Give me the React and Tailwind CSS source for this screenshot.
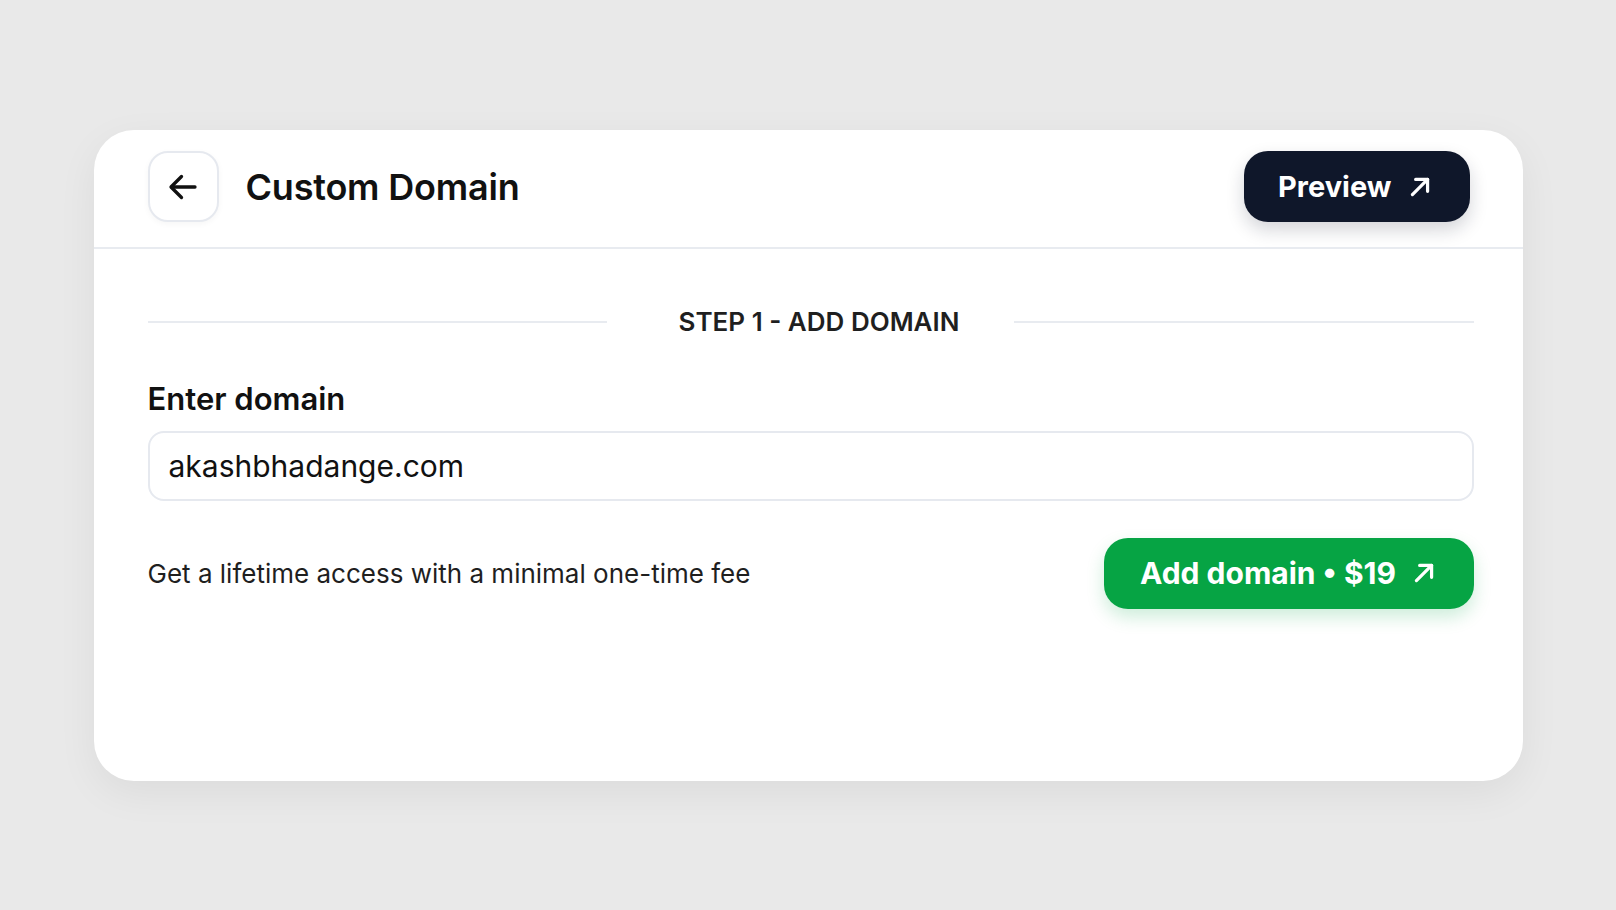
import React, { useState } from "react";

function ArrowLeftIcon() {
  return (
    <svg width="36" height="36" viewBox="0 0 24 24" fill="none" stroke="currentColor" strokeWidth="2.2" strokeLinecap="round" strokeLinejoin="round">
      <path d="M11 5 L4 12 L11 19" />
      <path d="M4.5 12 H20" />
    </svg>
  );
}

function ArrowUpRightIcon() {
  return (
    <svg width="26" height="26" viewBox="0 0 24 24" fill="none" stroke="currentColor" strokeWidth="3" strokeLinecap="round" strokeLinejoin="round">
      <path d="M5 19 L19 5" />
      <path d="M8 5 H19 V16" />
    </svg>
  );
}

export default function App() {
  const [domain, setDomain] = useState("akashbhadange.com");

  return (
    <div
      className="w-full h-[910px] bg-[#e9e9e9] flex items-center justify-center"
      style={{ fontFamily: "Inter, 'Noto Sans', sans-serif" }}
    >
      <div className="w-[1429px] h-[651px] bg-white rounded-[40px] shadow-[0_12px_40px_rgba(0,0,0,0.06)] flex flex-col overflow-hidden">
        {/* header */}
        <div className="h-[119px] shrink-0 flex items-center justify-between pl-[54px] pr-[53px] pb-[3px] border-b-2 border-[#e8ebf0]">
          <div className="flex items-center gap-[27px]">
            <button className="w-[71px] h-[71px] rounded-[20px] border-2 border-[#e6e9ef] bg-white flex items-center justify-center text-[#111] shadow-[0_2px_6px_rgba(0,0,0,0.04)]">
              <ArrowLeftIcon />
            </button>
            <h1 className="text-[36px] font-semibold text-[#111] tracking-[-0.2px]">Custom Domain</h1>
          </div>
          <button className="h-[71px] pl-[34px] pr-[37px] rounded-[24px] bg-[#0f172a] text-white flex items-center gap-[15px] shadow-[0_8px_18px_rgba(15,23,42,0.18)]">
            <span className="text-[29px] font-bold">Preview</span>
            <ArrowUpRightIcon />
          </button>
        </div>

        {/* body */}
        <div className="flex-1 pl-[54px] pr-[49px] pt-[58px]">
          <div className="h-[30px] flex items-center">
            <div className="flex-1 h-[2px] bg-[#e8ebf0]" />
            <span className="ml-[72px] mr-[55px] text-[26px] leading-[30px] font-semibold text-[#1f1f1f] uppercase">Step 1 - Add domain</span>
            <div className="flex-1 h-[2px] bg-[#e8ebf0]" />
          </div>

          <div className="mt-[44px] text-[31px] leading-[36px] font-semibold text-[#111]">Enter domain</div>
          <input
            value={domain}
            onChange={(e) => setDomain(e.target.value)}
            className="mt-[14px] block w-full h-[70px] rounded-[16px] border-2 border-[#e6e9ef] px-[19px] text-[30px] text-[#111] outline-none"
          />

          <div className="mt-[37px] flex items-center justify-between">
            <span className="text-[26px] text-[#1f1f1f]">Get a lifetime access with a minimal one-time fee</span>
            <button className="h-[71px] w-[370px] rounded-[24px] bg-[#06a444] text-white flex items-center justify-center gap-[15px] shadow-[0_8px_18px_rgba(7,166,69,0.2)]">
              <span className="text-[30px] font-bold">Add domain • $19</span>
              <ArrowUpRightIcon />
            </button>
          </div>
        </div>
      </div>
    </div>
  );
}
